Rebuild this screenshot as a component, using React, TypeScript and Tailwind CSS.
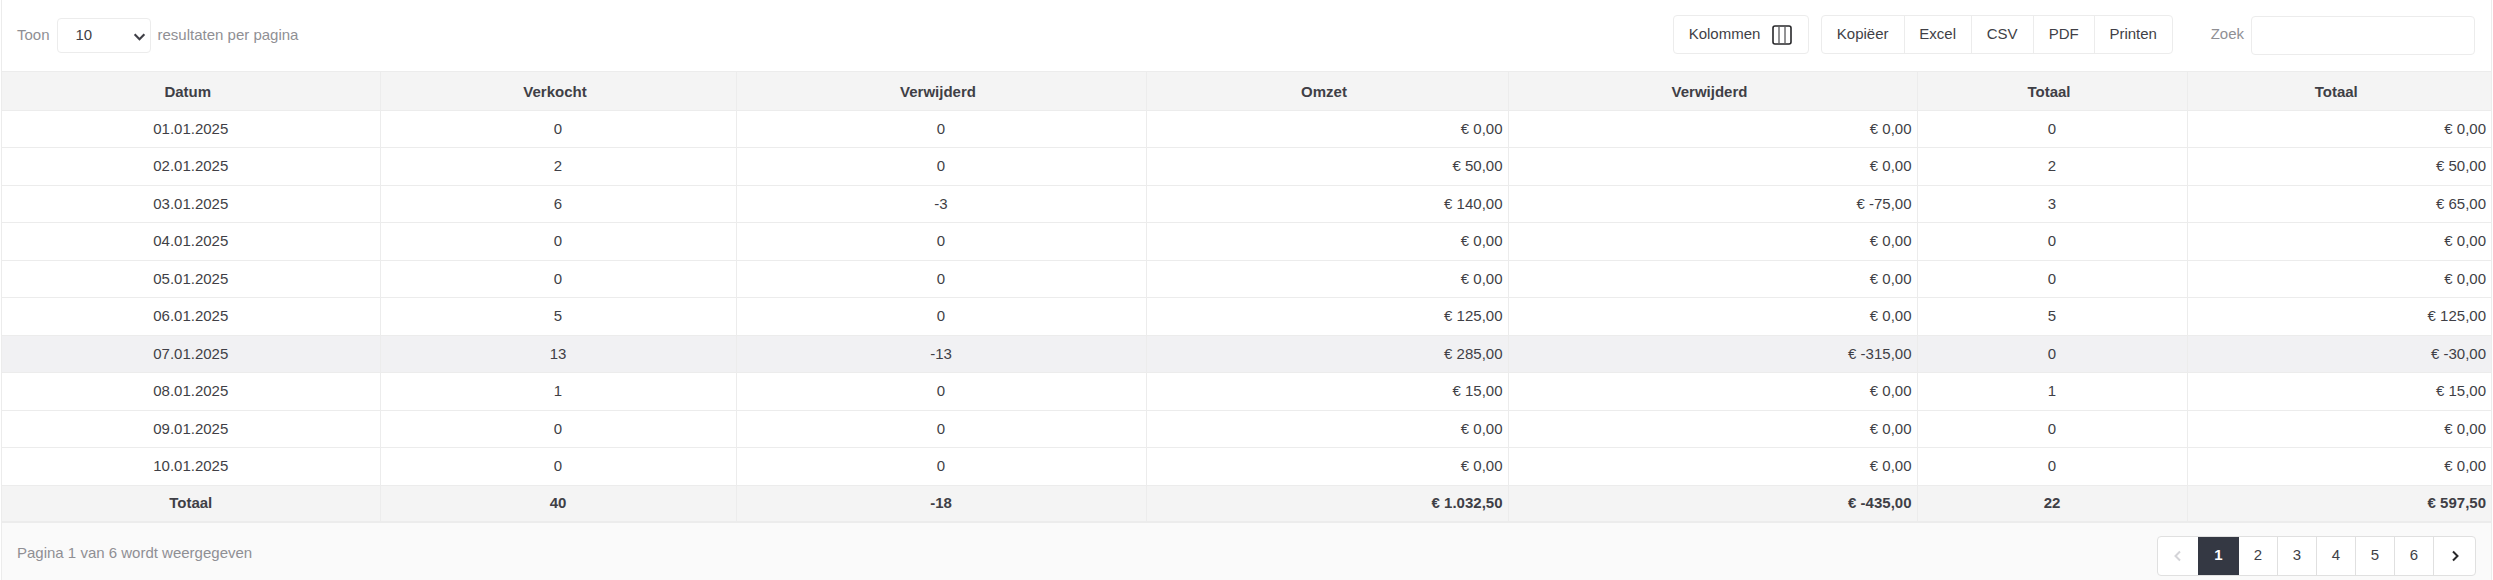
import React from "react";

const rows: string[][] = [
  ["01.01.2025", "0", "0", "€ 0,00", "€ 0,00", "0", "€ 0,00"],
  ["02.01.2025", "2", "0", "€ 50,00", "€ 0,00", "2", "€ 50,00"],
  ["03.01.2025", "6", "-3", "€ 140,00", "€ -75,00", "3", "€ 65,00"],
  ["04.01.2025", "0", "0", "€ 0,00", "€ 0,00", "0", "€ 0,00"],
  ["05.01.2025", "0", "0", "€ 0,00", "€ 0,00", "0", "€ 0,00"],
  ["06.01.2025", "5", "0", "€ 125,00", "€ 0,00", "5", "€ 125,00"],
  ["07.01.2025", "13", "-13", "€ 285,00", "€ -315,00", "0", "€ -30,00"],
  ["08.01.2025", "1", "0", "€ 15,00", "€ 0,00", "1", "€ 15,00"],
  ["09.01.2025", "0", "0", "€ 0,00", "€ 0,00", "0", "€ 0,00"],
  ["10.01.2025", "0", "0", "€ 0,00", "€ 0,00", "0", "€ 0,00"],
];
const heads = ["Datum", "Verkocht", "Verwijderd", "Omzet", "Verwijderd", "Totaal", "Totaal"];
const totals = ["Totaal", "40", "-18", "€ 1.032,50", "€ -435,00", "22", "€ 597,50"];
const widths = ["w-[378px]", "w-[356px]", "w-[410px]", "w-[362px]", "w-[409px]", "w-[270px]", "w-[304px]"];
const isRight = (i: number) => i === 3 || i === 4 || i === 6;

export default function App() {
  return (
    <div className="h-[580px] w-[2493px] bg-white font-['Liberation_Sans',Arial,sans-serif] text-[15px] text-[#3f3f46]">
      <div className="ml-[1px] flex h-[580px] w-[2491px] flex-col border-x border-[#ececec]">
        <div className="flex h-[72px] items-center border-b border-[#ececec] pl-[15px] pr-[16px] text-[15px]">
          <span className="text-[#8f8f94]">Toon</span>
          <div className="relative mx-[7px] flex h-[35px] w-[94px] items-center rounded border border-[#ececec] pl-[18px]">
            10
            <svg className="absolute right-[4px] top-[11px]" width="13" height="13" viewBox="0 0 24 24" fill="none" stroke="#3f3f46" strokeWidth="4"><path d="M3 8l9 9 9-9" /></svg>
          </div>
          <span className="text-[#8f8f94]">resultaten per pagina</span>
          <div className="-mt-[2px] ml-auto flex h-[39px] w-[136px] items-center rounded border border-[#ececec] pl-[15px]">
            Kolommen
            <svg className="ml-[12px]" width="20" height="20" viewBox="0 0 20 20" fill="none" stroke="#27272a"><rect x="1" y="1" width="18" height="18" rx="2" strokeWidth="1.6" /><path d="M7 2v16M13 2v16" strokeWidth="1" /></svg>
          </div>
          <div className="-mt-[2px] ml-[12px] flex h-[39px] items-center rounded border border-[#ececec]">
            <span className="flex h-full w-[83px] items-center justify-center border-r border-[#ececec]">Kopiëer</span>
            <span className="flex h-full w-[67px] items-center justify-center border-r border-[#ececec]">Excel</span>
            <span className="flex h-full w-[62px] items-center justify-center border-r border-[#ececec]">CSV</span>
            <span className="flex h-full w-[61px] items-center justify-center border-r border-[#ececec]">PDF</span>
            <span className="flex h-full w-[77px] items-center justify-center">Printen</span>
          </div>
          <span className="-mt-[2px] ml-[38px] text-[#8f8f94]">Zoek</span>
          <div className="ml-[7px] h-[39px] w-[224px] rounded border border-[#ececec]" />
        </div>
        <table className="w-[2489px] table-fixed border-collapse">
          <colgroup>
            {widths.map((w, i) => <col key={i} className={w} />)}
          </colgroup>
          <thead>
            <tr className="h-[38px] bg-[#f4f4f4]">
              {heads.map((h, i) => (
                <th key={i} className="border-r border-b border-[#ececec] pt-[2px] pb-0 pl-0 pr-[6px] text-center font-bold last:border-r-0">{h}</th>
              ))}
            </tr>
          </thead>
          <tbody>
            {rows.map((r, ri) => (
              <tr key={ri} className={ri === 6 ? "h-[37.5px] bg-[#f1f1f3]" : "h-[37.5px]"}>
                {r.map((c, i) => (
                  <td key={i} className={`border-r border-b border-[#ececec] p-0 last:border-r-0 ${isRight(i) ? "pr-[5px] text-right" : "text-center"}`}>{c}</td>
                ))}
              </tr>
            ))}
          </tbody>
          <tfoot>
            <tr className="h-[37px] bg-[#f4f4f4]">
              {totals.map((c, i) => (
                <td key={i} className={`border-r border-b-2 border-[#ececec] p-0 font-bold last:border-r-0 ${isRight(i) ? "pr-[5px] text-right" : "text-center"}`}>{c}</td>
              ))}
            </tr>
          </tfoot>
        </table>
        <div className="flex flex-1 items-center justify-between bg-[#fafafa] pl-[15px] pr-[15px] pt-[4px]">
          <span className="text-[#8f8f94]">Pagina 1 van 6 wordt weergegeven</span>
          <div className="mt-[4px] flex h-[40px] items-stretch rounded border border-[#e0e0e0] bg-white">
            <span className="flex w-[40px] items-center justify-center">
              <svg width="10" height="12" viewBox="0 0 10 12" fill="none" stroke="#d4d4d8" strokeWidth="2"><path d="M7 1.500L2.500 6 7 10.500" /></svg>
            </span>
            <span className="flex w-[41px] items-center justify-center bg-[#343843] font-bold text-white">1</span>
            {["2", "3", "4", "5", "6"].map((p) => (
              <span key={p} className="flex w-[39px] items-center justify-center border-r border-[#e0e0e0]">{p}</span>
            ))}
            <span className="flex w-[41px] items-center justify-center">
              <svg width="10" height="12" viewBox="0 0 10 12" fill="none" stroke="#27272a" strokeWidth="2"><path d="M3 1.500L7.500 6 3 10.500" /></svg>
            </span>
          </div>
        </div>
      </div>
    </div>
  );
}
